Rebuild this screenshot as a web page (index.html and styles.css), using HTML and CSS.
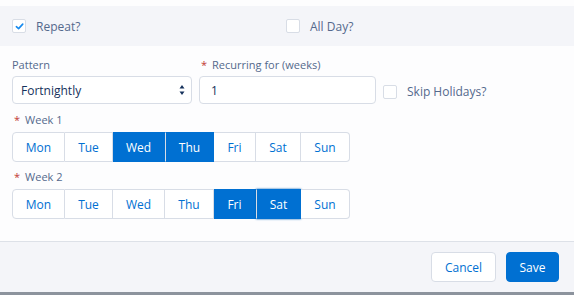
FILE: index.html
```html
<!DOCTYPE html>
<html lang="en">
<head>
    <meta charset="UTF-8">
    <title>Recurring Event</title>
    <link rel="stylesheet" href="styles.css">
</head>
<body>
    <div class="modal">
        <div class="modal-header">
            <label class="check-field repeat">
                <span class="checkbox checked">
                    <svg viewBox="0 0 10 10" width="9" height="9"><path d="M1.5 5.2 L4 7.4 L8.6 2.4" fill="none" stroke="#1589ee" stroke-width="1.8" stroke-linecap="round" stroke-linejoin="round"/></svg>
                </span>
                <span class="check-label">Repeat?</span>
            </label>
            <label class="check-field">
                <span class="checkbox"></span>
                <span class="check-label">All Day?</span>
            </label>
        </div>

        <div class="modal-body">
            <div class="field-row">
                <div class="form-group pattern">
                    <span class="field-label">Pattern</span>
                    <div class="select-box">
                        <span>Fortnightly</span>
                        <svg class="select-arrows" viewBox="0 0 6 12" width="6" height="12"><path d="M3 1 L5.5 4.5 H0.5 Z M3 11 L5.5 7.5 H0.5 Z" fill="#16325c"/></svg>
                    </div>
                </div>
                <div class="form-group recurring">
                    <span class="field-label"><abbr class="required">*</abbr>Recurring for (weeks)</span>
                    <div class="input-box">1</div>
                </div>
                <label class="check-field skip">
                    <span class="checkbox"></span>
                    <span class="check-label">Skip Holidays?</span>
                </label>
            </div>

            <div class="week-group">
                <span class="field-label"><abbr class="required">*</abbr>Week 1</span>
                <div class="day-buttons">
                    <button class="day mon">Mon</button>
                    <button class="day tue">Tue</button>
                    <button class="day wed selected">Wed</button>
                    <button class="day thu selected">Thu</button>
                    <button class="day fri">Fri</button>
                    <button class="day sat">Sat</button>
                    <button class="day sun">Sun</button>
                </div>
            </div>

            <div class="week-group">
                <span class="field-label"><abbr class="required">*</abbr>Week 2</span>
                <div class="day-buttons">
                    <button class="day mon">Mon</button>
                    <button class="day tue">Tue</button>
                    <button class="day wed">Wed</button>
                    <button class="day thu">Thu</button>
                    <button class="day fri selected">Fri</button>
                    <button class="day sat selected focused">Sat</button>
                    <button class="day sun">Sun</button>
                </div>
            </div>
        </div>

        <div class="modal-footer">
            <button class="btn btn-neutral">Cancel</button>
            <button class="btn btn-brand">Save</button>
        </div>
        <div class="backdrop-strip"></div>
    </div>
</body>
</html>
```

FILE: styles.css
```css
* {
    margin: 0;
    padding: 0;
    box-sizing: border-box;
    font-family: 'Open Sans', 'Liberation Sans', Arial, sans-serif;
}

body {
    background: #fdfdfe;
    width: 574px;
    height: 295px;
    overflow: hidden;
}

.modal {
    padding-top: 6px;
}

.modal-header {
    height: 40px;
    background: #f4f5f9;
    display: flex;
    align-items: center;
    padding-left: 12px;
}

.check-field {
    display: flex;
    align-items: center;
}

.check-field.repeat {
    width: 274px;
}

.checkbox {
    width: 14px;
    height: 14px;
    border: 1px solid #d8dde6;
    border-radius: 2px;
    background: #fff;
    display: flex;
    align-items: center;
    justify-content: center;
}

.check-label {
    margin-left: 10px;
    font-size: 12px;
    color: #54698d;
}

.modal-body {
    padding: 12px 12px 22px 12px;
}

.field-row {
    display: flex;
    align-items: flex-end;
}

.form-group {
    display: flex;
    flex-direction: column;
}

.field-label {
    display: block;
    height: 14px;
    line-height: 14px;
    font-size: 11px;
    color: #54698d;
    margin-bottom: 4px;
}

.required {
    color: #c23934;
    text-decoration: none;
    margin: 0 5px 0 2px;
}

.pattern {
    width: 180px;
}

.recurring {
    width: 177px;
    margin-left: 7px;
}

.select-box,
.input-box {
    height: 28px;
    border: 1px solid #d8dde6;
    border-radius: 4px;
    background: #fff;
    display: flex;
    align-items: center;
    padding-left: 8px;
    font-size: 12px;
    color: #16325c;
}

.input-box {
    padding-left: 11px;
}

.select-box span {
    flex: 1;
}

.select-arrows {
    margin-right: 6px;
}

.skip {
    margin-left: 7px;
    margin-bottom: 4px;
}

.week-group {
    margin-top: 9px;
}

.week-group + .week-group {
    margin-top: 8px;
}

.week-group .field-label {
    margin-bottom: 5px;
}

.day-buttons {
    display: flex;
}

.day {
    height: 30px;
    border: 1px solid #d8dde6;
    border-left: none;
    background: #fff;
    color: #0070d2;
    font-size: 12px;
    cursor: pointer;
}

.day:first-child {
    border-left: 1px solid #d8dde6;
    border-radius: 4px 0 0 4px;
}

.day:last-child {
    border-radius: 0 4px 4px 0;
}

.day.mon { width: 53px; }
.day.tue { width: 48px; }
.day.wed { width: 52px; }
.day.thu { width: 49px; }
.day.fri { width: 42px; }
.day.sat { width: 45px; }
.day.sun { width: 49px; }

.day.selected {
    background: #0070d2;
    border-color: #0070d2;
    color: #fff;
}

.day.selected + .day.selected {
    border-left: 1px solid #d8dde6;
}

.day.focused {
    box-shadow: 0 0 2px #005fb2;
}

.modal-footer {
    height: 51px;
    border-top: 1px solid #dde1e8;
    background: #f4f5f9;
    display: flex;
    align-items: center;
    justify-content: flex-end;
    padding-right: 15px;
}

.btn {
    height: 30px;
    border-radius: 4px;
    font-size: 12px;
    cursor: pointer;
}

.btn-neutral {
    width: 65px;
    background: #fff;
    border: 1px solid #d8dde6;
    color: #0070d2;
    margin-right: 10px;
}

.btn-brand {
    width: 53px;
    background: #0070d2;
    border: 1px solid #0070d2;
    color: #fff;
}

.backdrop-strip {
    height: 4px;
    background: #8c939d;
}
```
